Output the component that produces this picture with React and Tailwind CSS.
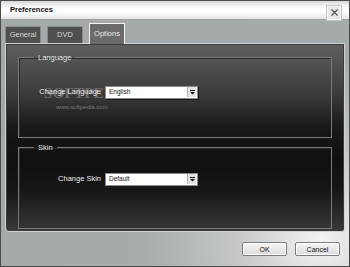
import React, { useState } from 'react';

const font = { fontFamily: '"Liberation Sans", Arial, sans-serif' };

const DropArrow = () => (
    <div className="w-[9px] h-[10px] bg-[#e4e4e4] border-l border-[#b5b5b5] flex items-center justify-center">
        <svg width="5" height="5" viewBox="0 0 5 5">
            <rect x="0" y="0" width="5" height="1" fill="#111" />
            <path d="M0 2 L5 2 L2.5 4.5 Z" fill="#111" />
        </svg>
    </div>
);

const FakeSelect = ({ value }) => (
    <div className="relative w-[93px] h-[13px] bg-white border border-[#8a8a8a] shadow-[1px_1px_0_#1a1a1a] flex items-center justify-between pl-[3px] pr-[1px]">
        <span className="text-[6.5px] text-[#111] leading-none">{value}</span>
        <DropArrow />
    </div>
);

const Group = ({ title, children, className }) => (
    <fieldset className={`relative border border-[#7a7a7a] shadow-[inset_1px_1px_0_#2a2a2a] mx-[12px] ${className}`}>
        <legend className="ml-[15px] px-[4px] text-[7.5px] text-[#e6e6e6] leading-none">{title}</legend>
        {children}
    </fieldset>
);

const Tab = ({ label, active, onClick }) => (
    <button
        onClick={onClick}
        className={`w-[36px] text-[7.5px] leading-none flex items-center justify-center rounded-t-[1px] ${
            active
                ? 'h-[21px] bg-[#6b6b6b] text-[#e8e8e8] border-t border-l border-r border-[#f4f4f4] -mb-[1px] relative z-10'
                : 'h-[17px] bg-[#4f4f4f] text-[#d8d8d8] border border-[#8c8c8c] border-b-0'
        }`}
    >
        {label}
    </button>
);

const App = () => {
    const [tab, setTab] = useState('Options');

    return (
        <div style={font} className="w-[350px] h-[267px] border border-[#4a4a4a] bg-[radial-gradient(circle_at_92%_90%,#f2f3f4_0%,#c3c7ca_22%,#a6abae_45%,#a3a8ab_100%)] flex flex-col overflow-hidden">
            {/* Title bar */}
            <div className="h-[19px] shrink-0 bg-[linear-gradient(to_bottom,#d8d8d8_0%,#fafafa_35%,#ffffff_60%,#e2e4e5_100%)] border-b border-[#9ea2a5] flex items-center justify-between pl-[9px] pr-[8px]">
                <span className="text-[7.5px] font-bold text-[#111]">Preferences</span>
                <div className="w-[14px] h-[14px] mt-[5px] border border-[#f6f6f6] bg-[#e6e7e8] shadow-[0_0_0_1px_#c4c6c8] flex items-center justify-center">
                    <svg width="7" height="7" viewBox="0 0 7 7">
                        <path d="M0.5 0.5 L6.5 6.5 M6.5 0.5 L0.5 6.5" stroke="#555" strokeWidth="1.3" />
                    </svg>
                </div>
            </div>

            {/* Tabs */}
            <div className="flex items-end gap-[6px] px-[4px] pt-[2px] h-[23px] shrink-0">
                {['General', 'DVD', 'Options'].map(t => (
                    <Tab key={t} label={t} active={tab === t} onClick={() => setTab(t)} />
                ))}
            </div>

            {/* Panel */}
            <div className="mx-[4px] h-[189px] shrink-0 rounded-bl-[4px] rounded-br-[3px] border border-[#d0d2d4] shadow-[inset_0_0_0_1px_#3c3c3c] bg-[linear-gradient(to_bottom,#5f5f5f_0%,#3e3e3e_25%,#181818_45%,#101010_62%,#161616_78%,#393939_100%)] pt-[10px] flex flex-col gap-[6px]">
                <Group title="Language" className="h-[84px]">
                    <span className="absolute left-[25px] top-[20px] text-[15px] font-bold tracking-[0.3px] text-[#6c6c6c]" style={{ fontFamily: '"Liberation Serif", serif' }}>
                        SOFTPEDIA<sup className="text-[6px]">®</sup>
                    </span>
                    <span className="absolute left-[37px] top-[41px] text-[6px] text-[#7a7a7a]">www.softpedia.com</span>
                    <div className="relative flex items-center mt-[24px]">
                        <span className="w-[86px] text-right pr-[4px] text-[7.5px] text-[#ececec]">Change Language</span>
                        <FakeSelect value="English" />
                    </div>
                </Group>
                <Group title="Skin" className="h-[85px]">
                    <div className="flex items-center mt-[21px]">
                        <span className="w-[86px] text-right pr-[4px] text-[7.5px] text-[#ececec]">Change Skin</span>
                        <FakeSelect value="Default" />
                    </div>
                </Group>
            </div>

            {/* Buttons */}
            <div className="flex justify-end gap-[8px] pr-[9px] pt-[10px]">
                {['OK', 'Cancel'].map(b => (
                    <button key={b} className="w-[45px] h-[14px] text-[7px] text-[#111] bg-[linear-gradient(to_bottom,#f6f6f6,#dcdcdc)] border border-[#7d7d7d] rounded-[2px] shadow-[inset_0_0_0_1px_#ffffff] leading-none">
                        {b}
                    </button>
                ))}
            </div>
        </div>
    );
};

export default App;
